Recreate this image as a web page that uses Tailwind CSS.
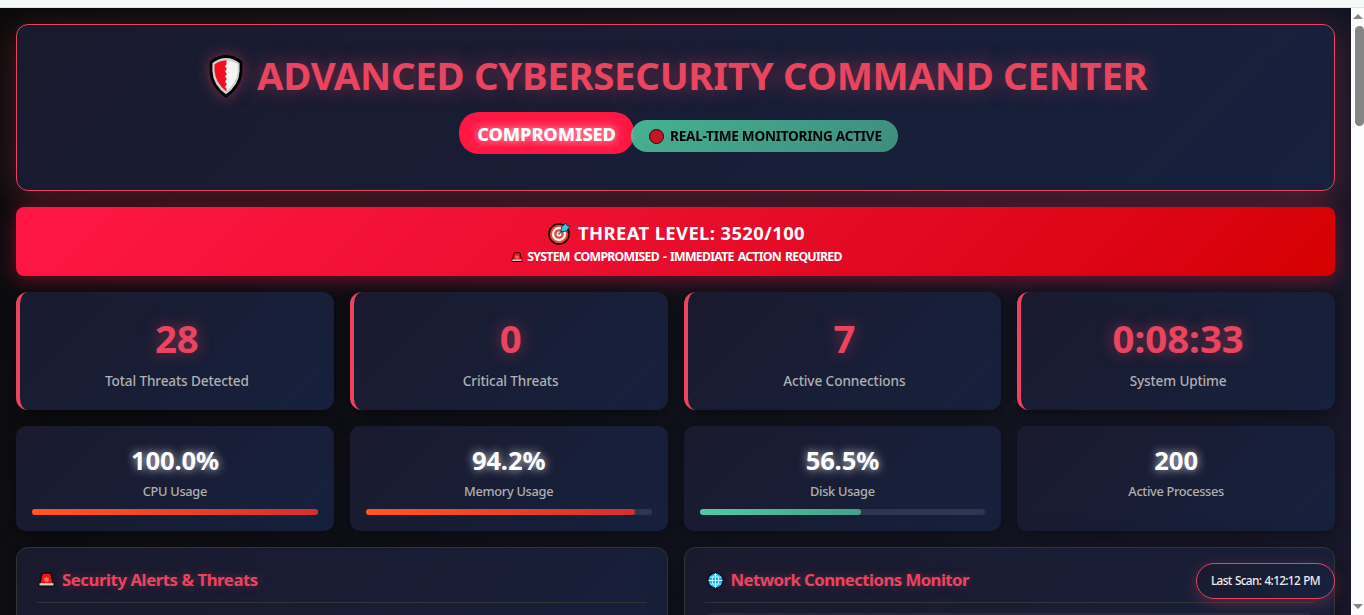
<!DOCTYPE html>
<html lang="en">
<head>
<meta charset="utf-8">
<title>Advanced Cybersecurity Command Center</title>
<script src="https://cdn.jsdelivr.net/npm/@tailwindcss/browser@4"></script>
</head>
<body class="h-[615px] overflow-hidden bg-[#f5faf9] font-['Noto_Sans','Open_Sans',sans-serif] text-white">
<svg class="hidden">
  <symbol id="siren" viewBox="0 0 18 16">
    <path d="M2 11.500 3.800 3Q4.200 1 6 1h6q1.800 0 2.200 2L16 11.500l1 .8V15H1v-2.700z" fill="#f01020" stroke="#16080c" stroke-width="1.600" stroke-linejoin="round"/>
    <path d="m9 4.500 1 1.800 2-.2-.8 1.800 1.500 1.500-2 .4L9 11.500 7.400 9.800l-2-.4 1.400-1.500L6 6.100l2 .2z" fill="#ff6a50"/>
    <path d="M1.500 12h15v2.300h-15z" fill="#d0d0d0"/>
  </symbol>
</svg>
<div class="h-2 border-b border-[#dfe5e5]"></div>
<div class="flex h-[607px]">
  <main class="relative h-full w-[1351px] overflow-hidden bg-linear-135 from-[#0a0a0a] to-[#1a1a2e] p-4">
    <header class="h-[167px] rounded-xl border border-[#e94560] bg-linear-135 from-[#1a1a2e] to-[#16213e] pt-6 shadow-[0_8px_32px_rgba(233,69,96,0.3)]">
      <h1 class="flex h-[53px] items-center pl-[192px] text-[38.4px] leading-[53px] font-bold tracking-[-0.31px] text-[#e94560] [text-shadow:0_0_20px_rgba(233,69,96,0.5)]">
        <svg class="mt-0.5 h-[43px] w-[34px] shrink-0 drop-shadow-[0_0_7px_rgba(233,69,96,0.5)]" viewBox="0 0 34 43">
          <path d="M17 1.500Q25.500 1.500 32 7.500V16Q31.500 31 17 41.200 2.500 31 2 16V7.500Q8.500 1.500 17 1.500z" fill="#d0d0d0" stroke="#000" stroke-width="2.800"/>
          <path d="M17 5.500Q24 5.500 28.800 9.500V16Q28 28 17 36.500z" fill="#f4f4f4"/>
          <path d="M17.500 5.200Q10 5.500 5.500 9.500V16Q6.500 28 17.500 36.500V33.500l-1.800-1.800 1.800-1.800v-1.500l-1.800-1.800 1.800-1.800v-1.500l-1.800-1.800 1.800-1.800v-1.500l-1.800-1.800 1.800-1.800v-1.500l-1.800-1.800 1.800-1.800z" fill="#f01022"/>
        </svg>
        <span class="ml-[14px] whitespace-nowrap">ADVANCED CYBERSECURITY COMMAND CENTER</span>
      </h1>
      <div class="mt-2.5 flex items-start justify-center pl-1.5">
        <div class="flex h-[42px] w-[175px] items-center justify-center rounded-[20px] bg-[#ff1744] text-[18.2px] font-extrabold tracking-[-0.1px] [text-shadow:0_0_10px_rgba(255,255,255,0.8)]"><span class="pt-[3px]">COMPROMISED</span></div>
        <div class="mt-2 -ml-[3px] flex h-8 w-[267px] items-center rounded-[20px] bg-linear-135 from-[#4ecca3] to-[#45a08a] pl-[18px] text-[13.6px] font-bold tracking-[-0.26px] text-black opacity-85">
          <span class="size-[15px] rounded-full border border-[#300] bg-[#e81224]"></span>
          <span class="ml-[6px] whitespace-nowrap">REAL-TIME MONITORING ACTIVE</span>
        </div>
      </div>
    </header>

    <section class="mt-4 h-[69px] rounded-lg bg-linear-135 from-[#ff1744] to-[#d50000] pt-[13px] shadow-[0_4px_20px_rgba(255,23,68,0.4)]">
      <div class="flex h-[26px] items-center justify-center pl-0.5 text-[18.4px] leading-[26px] font-bold tracking-[0.4px]">
        <svg class="mr-[7px] size-[23px]" viewBox="0 0 23 23">
          <circle cx="11" cy="12" r="10" fill="#e8452c" stroke="#1a0a0a" stroke-width="1.600"/>
          <circle cx="11" cy="12" r="7.200" fill="#f4f4f4"/><circle cx="11" cy="12" r="4.800" fill="#e8452c"/><circle cx="11" cy="12" r="2.500" fill="#f4f4f4"/>
          <path d="m10.500 12.500 5-5" stroke="#1c7fb0" stroke-width="1.600"/>
          <path d="m13 10 .5-5L18 1l1 2.600 3 .6L18.500 9z" fill="#35c4f0" stroke="#123" stroke-width=".8"/>
        </svg>
        <span class="whitespace-nowrap">THREAT LEVEL: 3520/100</span>
      </div>
      <div class="flex h-[22px] items-center justify-center pl-0.5 text-[12.3px] leading-[22px] font-bold tracking-[-0.74px] [word-spacing:1.5px]">
        <svg class="mr-1 h-[10px] w-3"><use href="#siren"/></svg>
        <span class="whitespace-nowrap">SYSTEM COMPROMISED - IMMEDIATE ACTION REQUIRED</span>
      </div>
    </section>

    <section class="mt-4 grid grid-cols-4 gap-4 text-center">
      <div class="h-[118px] rounded-xl border-l-4 border-[#e94560] bg-linear-135 from-[#1a1a2e] to-[#16213e] pt-5 shadow-[0_4px_20px_rgba(0,0,0,0.5)]">
        <div class="text-[38.4px] leading-[53px] font-bold text-[#e94560] [text-shadow:0_0_15px_rgba(233,69,96,0.5)]">28</div>
        <div class="mt-1.5 text-[13.6px] leading-5 font-medium tracking-[-0.13px] text-[#b0b0b0]">Total Threats Detected</div>
      </div>
      <div class="h-[118px] rounded-xl border-l-4 border-[#e94560] bg-linear-135 from-[#1a1a2e] to-[#16213e] pt-5 shadow-[0_4px_20px_rgba(0,0,0,0.5)]">
        <div class="text-[38.4px] leading-[53px] font-bold text-[#e94560] [text-shadow:0_0_15px_rgba(233,69,96,0.5)]">0</div>
        <div class="mt-1.5 text-[13.6px] leading-5 font-medium tracking-[-0.13px] text-[#b0b0b0]">Critical Threats</div>
      </div>
      <div class="h-[118px] rounded-xl border-l-4 border-[#e94560] bg-linear-135 from-[#1a1a2e] to-[#16213e] pt-5 shadow-[0_4px_20px_rgba(0,0,0,0.5)]">
        <div class="text-[38.4px] leading-[53px] font-bold text-[#e94560] [text-shadow:0_0_15px_rgba(233,69,96,0.5)]">7</div>
        <div class="mt-1.5 text-[13.6px] leading-5 font-medium tracking-[-0.08px] text-[#b0b0b0]">Active Connections</div>
      </div>
      <div class="h-[118px] rounded-xl border-l-4 border-[#e94560] bg-linear-135 from-[#1a1a2e] to-[#16213e] pt-5 shadow-[0_4px_20px_rgba(0,0,0,0.5)]">
        <div class="text-[38.4px] leading-[53px] font-bold text-[#e94560] [text-shadow:0_0_15px_rgba(233,69,96,0.5)]">0:08:33</div>
        <div class="mt-1.5 text-[13.6px] leading-5 font-medium tracking-[-0.15px] text-[#b0b0b0]">System Uptime</div>
      </div>
    </section>

    <section class="mt-4 grid grid-cols-4 gap-4 text-center">
      <div class="h-[105px] rounded-[10px] bg-linear-135 from-[#1a1a2e] to-[#16213e] px-4 pt-[17px] shadow-[0_4px_20px_rgba(0,0,0,0.4)]">
        <div class="text-[25.6px] leading-9 font-bold tracking-[-0.15px] [text-shadow:0_0_10px_rgba(255,255,255,0.8)]">100.0%</div>
        <div class="mt-[3px] text-[12.8px] leading-[18px] font-medium tracking-[-0.3px] text-[#b0b0b0]">CPU Usage</div>
        <div class="mt-[9px] h-1.5 rounded-full bg-white/10"><div class="h-full w-full rounded-full bg-linear-to-r from-[#ff5722] to-[#d32f2f]"></div></div>
      </div>
      <div class="h-[105px] rounded-[10px] bg-linear-135 from-[#1a1a2e] to-[#16213e] px-4 pt-[17px] shadow-[0_4px_20px_rgba(0,0,0,0.4)]">
        <div class="text-[25.6px] leading-9 font-bold tracking-[-0.15px] [text-shadow:0_0_10px_rgba(255,255,255,0.8)]">94.2%</div>
        <div class="mt-[3px] text-[12.8px] leading-[18px] font-medium tracking-[-0.3px] text-[#b0b0b0]">Memory Usage</div>
        <div class="mt-[9px] h-1.5 rounded-full bg-white/10"><div class="h-full w-[94.2%] rounded-full bg-linear-to-r from-[#ff5722] to-[#d32f2f]"></div></div>
      </div>
      <div class="h-[105px] rounded-[10px] bg-linear-135 from-[#1a1a2e] to-[#16213e] px-4 pt-[17px] shadow-[0_4px_20px_rgba(0,0,0,0.4)]">
        <div class="text-[25.6px] leading-9 font-bold tracking-[-0.15px] [text-shadow:0_0_10px_rgba(255,255,255,0.8)]">56.5%</div>
        <div class="mt-[3px] text-[12.8px] leading-[18px] font-medium tracking-[-0.3px] text-[#b0b0b0]">Disk Usage</div>
        <div class="mt-[9px] h-1.5 rounded-full bg-white/10"><div class="h-full w-[56.5%] rounded-full bg-linear-to-r from-[#4ecca3] to-[#45a08a]"></div></div>
      </div>
      <div class="h-[105px] rounded-[10px] bg-linear-135 from-[#1a1a2e] to-[#16213e] px-4 pt-[17px] shadow-[0_4px_20px_rgba(0,0,0,0.4)]">
        <div class="text-[25.6px] leading-9 font-bold [text-shadow:0_0_10px_rgba(255,255,255,0.8)]">200</div>
        <div class="mt-[3px] text-[12.8px] leading-[18px] font-medium tracking-[-0.33px] text-[#b0b0b0]">Active Processes</div>
      </div>
    </section>

    <section class="mt-4 grid grid-cols-2 gap-4">
      <div class="h-[400px] rounded-xl border border-[#333] bg-linear-135 from-[#1a1a2e] to-[#16213e] px-5 pt-5 shadow-[0_8px_32px_rgba(0,0,0,0.5)]">
        <h2 class="flex h-[35px] items-start border-b border-[#333] text-[16.8px] leading-6 font-bold tracking-[-0.46px] text-[#e94560] [text-shadow:0_0_10px_rgba(233,69,96,0.4)]">
          <svg class="mt-1 ml-px h-[15px] w-[17px]"><use href="#siren"/></svg>
          <span class="ml-[7px] whitespace-nowrap">Security Alerts &amp; Threats</span>
        </h2>
      </div>
      <div class="h-[400px] rounded-xl border border-[#333] bg-linear-135 from-[#1a1a2e] to-[#16213e] px-5 pt-5 shadow-[0_8px_32px_rgba(0,0,0,0.5)]">
        <h2 class="flex h-[35px] items-start border-b border-[#333] text-[16.8px] leading-6 font-bold tracking-[-0.57px] text-[#e94560] [text-shadow:0_0_10px_rgba(233,69,96,0.4)]">
          <svg class="mt-1 ml-0.5 size-[17px]" viewBox="0 0 17 17" fill="none">
            <circle cx="8.500" cy="8.500" r="7.700" fill="#0ab4f0" stroke="#0a0a14" stroke-width="1.400"/>
            <path d="M8.500 1.500v14M1.500 8.500h14M2.800 5h11.400M2.800 12h11.400M8.500 1.500q-7 7 0 14M8.500 1.500q7 7 0 14" stroke="#d8f6ff" stroke-width=".9"/>
          </svg>
          <span class="ml-[7px] whitespace-nowrap">Network Connections Monitor</span>
        </h2>
        <div class="mt-2.5 h-20 rounded-lg bg-white/5"></div>
      </div>
    </section>

    <div class="absolute top-[555px] right-4 flex h-9 w-[139px] items-center justify-center rounded-[20px] border border-[#e94560] bg-linear-135 from-[#1a1a2e] to-[#16213e] text-[11.8px] font-medium tracking-[-0.68px] text-[#eee] shadow-[0_4px_15px_rgba(233,69,96,0.3)] [word-spacing:1px]"><span class="whitespace-nowrap">Last Scan: 4:12:12 PM</span></div>
  </main>
  <div class="flex w-[13px] flex-col items-center bg-[#fcfcfc]">
    <div class="mt-1.5 size-0 border-x-[5px] border-b-[5px] border-x-transparent border-b-[#858585]"></div>
    <div class="mt-[7px] ml-[3px] h-[100px] w-[9px] rounded-full bg-[#858585]"></div>
    <div class="mt-auto mb-1.5 size-0 border-x-[5px] border-t-[5px] border-x-transparent border-t-[#858585]"></div>
  </div>
</div>
</body>
</html>
